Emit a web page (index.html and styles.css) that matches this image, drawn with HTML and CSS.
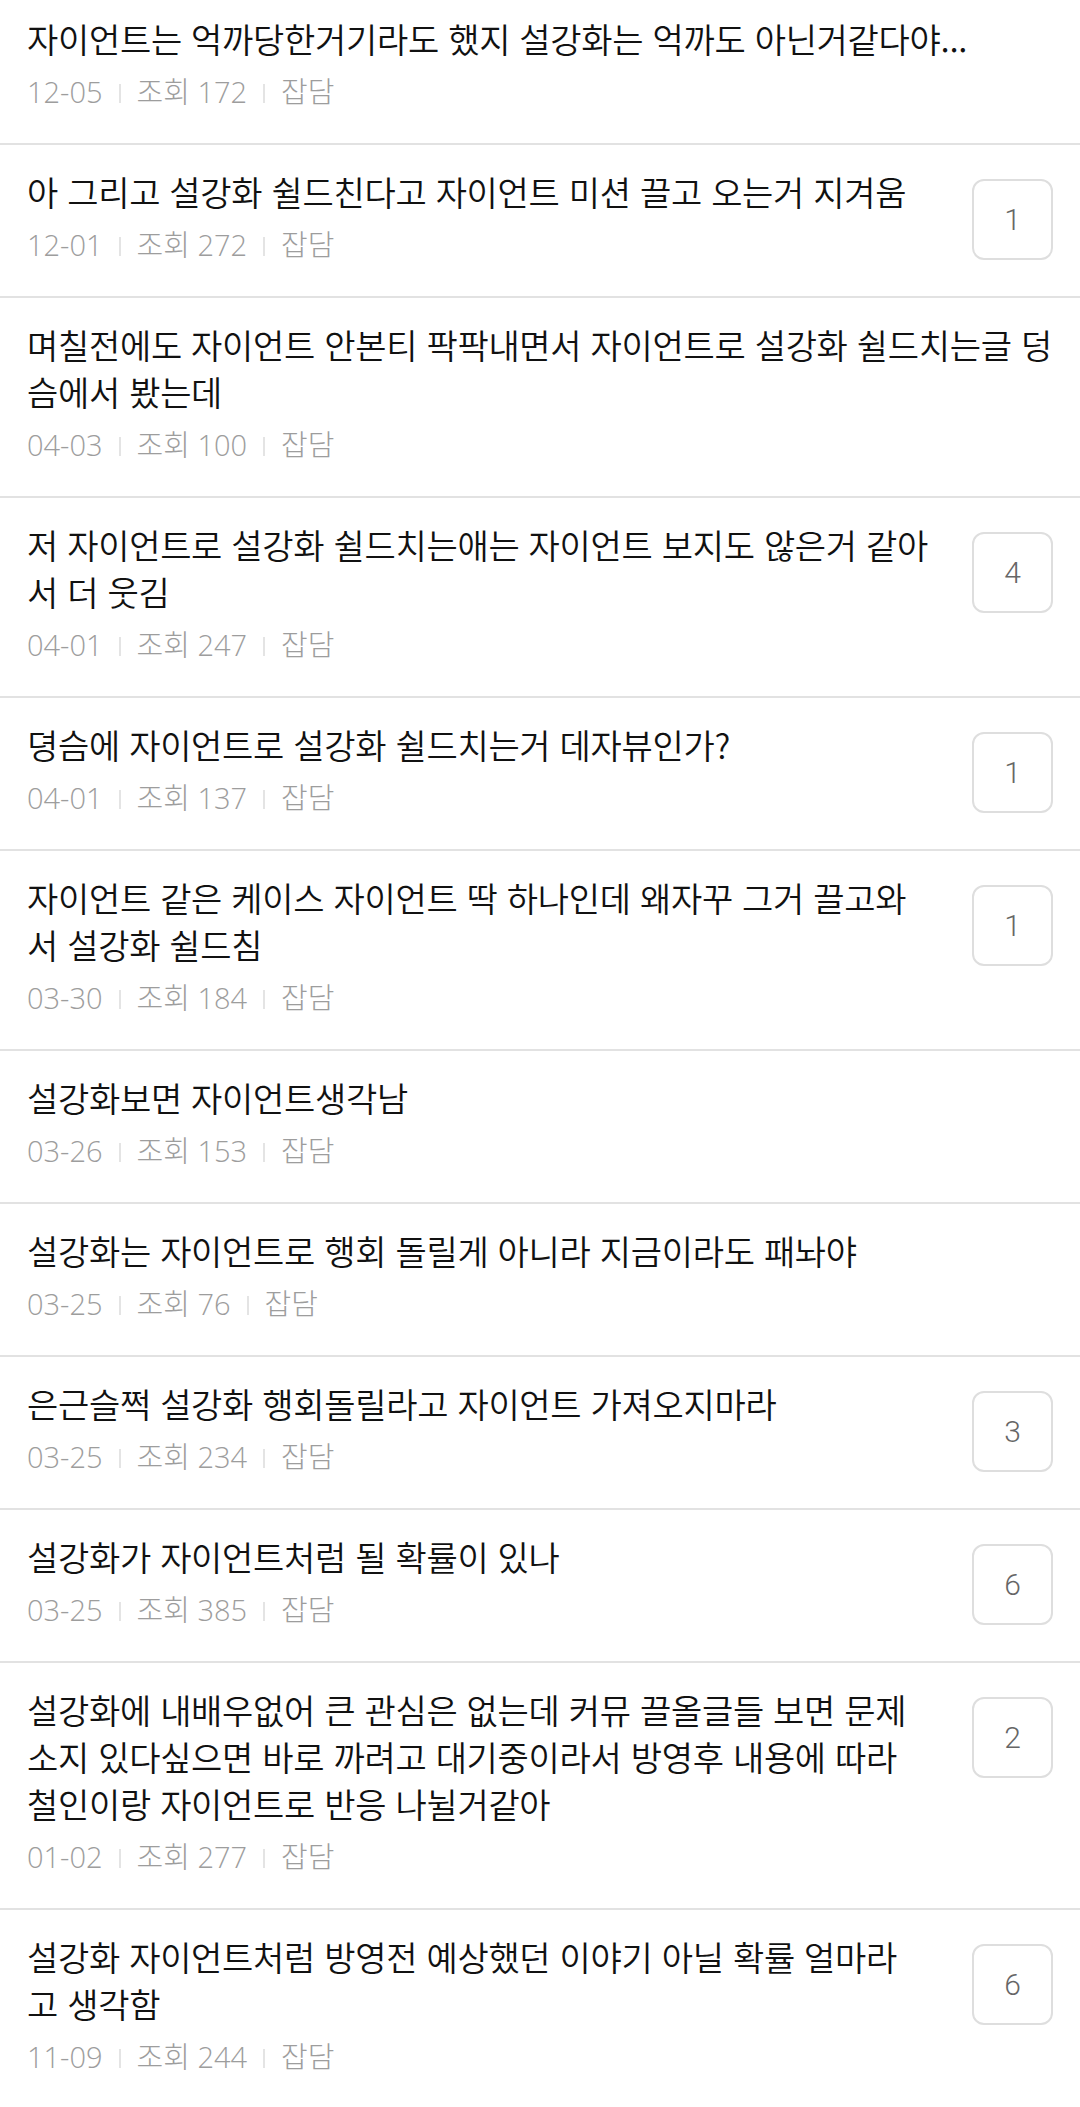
FILE: index.html
```html
<!DOCTYPE html>
<html lang="ko">
<head>
<meta charset="utf-8">
<title>게시글 목록</title>
<link rel="stylesheet" href="styles.css">
</head>
<body>
<ul class="post-list">
  <li class="post">
    <div class="post-body">
      <p class="post-title">자이언트는 억까당한거기라도 했지 설강화는 억까도 아닌거같다야...</p>
      <p class="post-meta"><span>12-05</span><i class="sep"></i><span>조회 172</span><i class="sep"></i><span>잡담</span></p>
    </div>
  </li>
  <li class="post">
    <div class="post-body">
      <p class="post-title">아 그리고 설강화 쉴드친다고 자이언트 미션 끌고 오는거 지겨움</p>
      <p class="post-meta"><span>12-01</span><i class="sep"></i><span>조회 272</span><i class="sep"></i><span>잡담</span></p>
    </div>
    <span class="comments">1</span>
  </li>
  <li class="post">
    <div class="post-body">
      <p class="post-title">며칠전에도 자이언트 안본티 팍팍내면서 자이언트로 설강화 쉴드치는글 덩<br>슴에서 봤는데</p>
      <p class="post-meta"><span>04-03</span><i class="sep"></i><span>조회 100</span><i class="sep"></i><span>잡담</span></p>
    </div>
  </li>
  <li class="post">
    <div class="post-body">
      <p class="post-title">저 자이언트로 설강화 쉴드치는애는 자이언트 보지도 않은거 같아<br>서 더 웃김</p>
      <p class="post-meta"><span>04-01</span><i class="sep"></i><span>조회 247</span><i class="sep"></i><span>잡담</span></p>
    </div>
    <span class="comments">4</span>
  </li>
  <li class="post">
    <div class="post-body">
      <p class="post-title">뎡슴에 자이언트로 설강화 쉴드치는거 데자뷰인가?</p>
      <p class="post-meta"><span>04-01</span><i class="sep"></i><span>조회 137</span><i class="sep"></i><span>잡담</span></p>
    </div>
    <span class="comments">1</span>
  </li>
  <li class="post">
    <div class="post-body">
      <p class="post-title">자이언트 같은 케이스 자이언트 딱 하나인데 왜자꾸 그거 끌고와<br>서 설강화 쉴드침</p>
      <p class="post-meta"><span>03-30</span><i class="sep"></i><span>조회 184</span><i class="sep"></i><span>잡담</span></p>
    </div>
    <span class="comments">1</span>
  </li>
  <li class="post">
    <div class="post-body">
      <p class="post-title">설강화보면 자이언트생각남</p>
      <p class="post-meta"><span>03-26</span><i class="sep"></i><span>조회 153</span><i class="sep"></i><span>잡담</span></p>
    </div>
  </li>
  <li class="post">
    <div class="post-body">
      <p class="post-title">설강화는 자이언트로 행회 돌릴게 아니라 지금이라도 패놔야</p>
      <p class="post-meta"><span>03-25</span><i class="sep"></i><span>조회 76</span><i class="sep"></i><span>잡담</span></p>
    </div>
  </li>
  <li class="post">
    <div class="post-body">
      <p class="post-title">은근슬쩍 설강화 행회돌릴라고 자이언트 가져오지마라</p>
      <p class="post-meta"><span>03-25</span><i class="sep"></i><span>조회 234</span><i class="sep"></i><span>잡담</span></p>
    </div>
    <span class="comments">3</span>
  </li>
  <li class="post">
    <div class="post-body">
      <p class="post-title">설강화가 자이언트처럼 될 확률이 있나</p>
      <p class="post-meta"><span>03-25</span><i class="sep"></i><span>조회 385</span><i class="sep"></i><span>잡담</span></p>
    </div>
    <span class="comments">6</span>
  </li>
  <li class="post">
    <div class="post-body">
      <p class="post-title">설강화에 내배우없어 큰 관심은 없는데 커뮤 끌올글들 보면 문제<br>소지 있다싶으면 바로 까려고 대기중이라서 방영후 내용에 따라<br>철인이랑 자이언트로 반응 나뉠거같아</p>
      <p class="post-meta"><span>01-02</span><i class="sep"></i><span>조회 277</span><i class="sep"></i><span>잡담</span></p>
    </div>
    <span class="comments">2</span>
  </li>
  <li class="post">
    <div class="post-body">
      <p class="post-title">설강화 자이언트처럼 방영전 예상했던 이야기 아닐 확률 얼마라<br>고 생각함</p>
      <p class="post-meta"><span>11-09</span><i class="sep"></i><span>조회 244</span><i class="sep"></i><span>잡담</span></p>
    </div>
    <span class="comments">6</span>
  </li>
</ul>
</body>
</html>
```

FILE: styles.css
```css
html, body {
  margin: 0;
  padding: 0;
  background: #ffffff;
}

body {
  font-family: "Noto Sans CJK KR", "Noto Sans", sans-serif;
  color: #111111;
  overflow: hidden;
}

.post-list {
  list-style: none;
  margin: -8px 0 0 0;
  padding: 0;
}

.post {
  display: flex;
  align-items: flex-start;
  padding: 23px 27px 31px 27px;
  border-bottom: 2px solid #e2e2e2;
}

.post-body {
  flex: 1;
  min-width: 0;
}

.post-title {
  margin: 0;
  font-size: 34px;
  line-height: 47px;
  font-weight: 350;
  white-space: nowrap;
  font-feature-settings: "palt";
  letter-spacing: -0.3px;
  color: #111111;
}

.post-meta {
  margin: 10px 0 0 0;
  display: flex;
  align-items: center;
  font-family: "Open Sans", "Noto Sans CJK KR", sans-serif;
  font-size: 29px;
  line-height: 40px;
  font-weight: 300;
  color: #9d9d9d;
  font-feature-settings: "palt";
}

.sep {
  display: inline-block;
  width: 2px;
  height: 19px;
  margin: 2px 16px 0 16px;
  background: #e4e4e4;
}

.comments {
  flex: none;
  box-sizing: border-box;
  width: 81px;
  height: 81px;
  margin: 11px 0 0 40px;
  border: 2px solid #dedede;
  border-radius: 12px;
  display: flex;
  align-items: center;
  justify-content: center;
  font-family: "Roboto", "Noto Sans", sans-serif;
  font-weight: 300;
  font-size: 30px;
  color: #666666;
}
```
